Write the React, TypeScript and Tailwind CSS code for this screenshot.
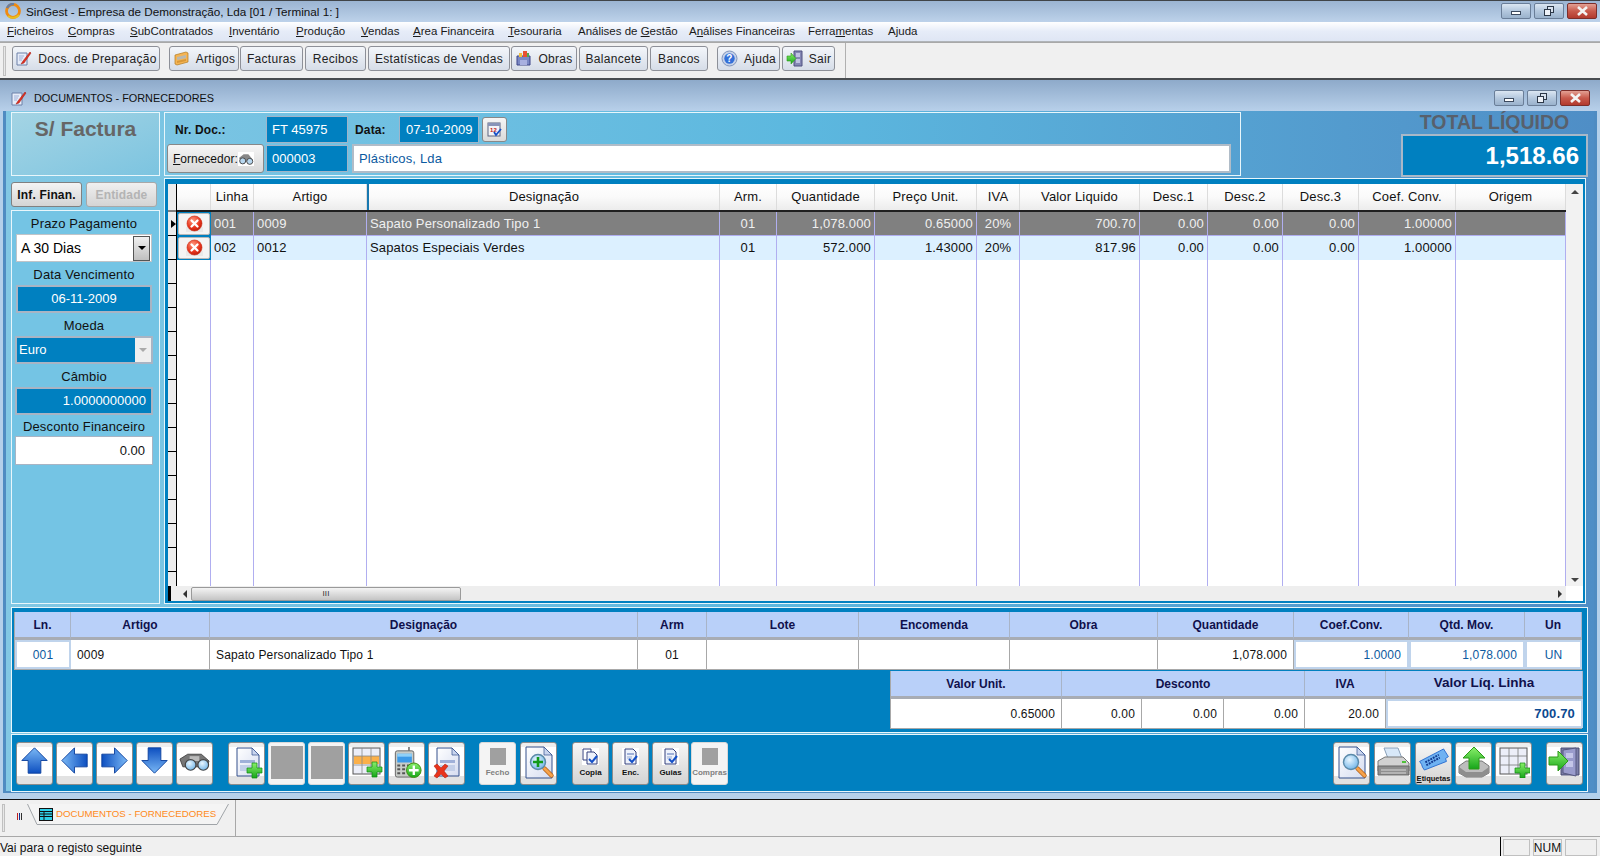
import React from "react";

const menus: [string, string, string, string][] = [
  ["w-[61px]", "", "F", "icheiros"],
  ["w-[62px]", "", "C", "ompras"],
  ["w-[99px]", "", "S", "ubContratados"],
  ["w-[67px]", "", "I", "nventário"],
  ["w-[65px]", "", "P", "rodução"],
  ["w-[52px]", "", "V", "endas"],
  ["w-[95px]", "", "A", "rea Financeira"],
  ["w-[70px]", "", "T", "esouraria"],
  ["w-[111px]", "Análises de ", "G", "estão"],
  ["w-[119px]", "A", "n", "álises Financeiras"],
  ["w-[80px]", "Ferra", "m", "entas"],
  ["w-[40px]", "A", "j", "uda"],
];

function Defs() {
  return (
    <svg width="0" height="0" className="absolute">
      <defs>
        <linearGradient id="gBlue" x1="0" y1="0" x2="0" y2="1">
          <stop offset="0" stopColor="#7ab8f5" />
          <stop offset="1" stopColor="#0d4fc0" />
        </linearGradient>
        <linearGradient id="gDoc" x1="0" y1="0" x2="1" y2="1">
          <stop offset="0" stopColor="#ffffff" />
          <stop offset="1" stopColor="#d5dcf0" />
        </linearGradient>
        <linearGradient id="gGreen" x1="0" y1="0" x2="0" y2="1">
          <stop offset="0" stopColor="#8af06a" />
          <stop offset="1" stopColor="#16a51a" />
        </linearGradient>
        <radialGradient id="gRed" cx="0.4" cy="0.3" r="0.8">
          <stop offset="0" stopColor="#ff9a80" />
          <stop offset="0.6" stopColor="#e8341c" />
          <stop offset="1" stopColor="#b01808" />
        </radialGradient>
        <radialGradient id="gLens" cx="0.4" cy="0.35" r="0.7">
          <stop offset="0" stopColor="#e8f6ff" />
          <stop offset="1" stopColor="#6fb4e8" />
        </radialGradient>
      </defs>
    </svg>
  );
}

function Plus({ x, y, s = 16 }: { x: number; y: number; s?: number }) {
  const u = s / 3;
  return (
    <path
      transform={`translate(${x} ${y})`}
      d={`M${u} 0h${u}v${u}h${u}v${u}h${-u}v${u}h${-u}v${-u}h${-u}v${-u}h${u}z`}
      fill="url(#gGreen)"
      stroke="#0c8a10"
      strokeWidth="0.7"
    />
  );
}

function DocShape() {
  return (
    <>
      <path d="M6 2h15l7 7v21H6z" fill="url(#gDoc)" stroke="#34508c" strokeWidth="1" />
      <path d="M21 2v7h7z" fill="#c8d4ee" stroke="#34508c" strokeWidth="0.7" />
      <rect x="9" y="14" width="15" height="3" fill="#9fb0d8" />
      <rect x="9" y="19" width="15" height="6" fill="#c3cfe8" />
    </>
  );
}

function Lens({ cx = 16, cy = 17, r = 7 }: { cx?: number; cy?: number; r?: number }) {
  return (
    <>
      <path d={`M${cx + r - 1} ${cy + r - 1}l7 7`} stroke="#b05a10" strokeWidth="4.4" strokeLinecap="round" />
      <path d={`M${cx + r - 1} ${cy + r - 1}l7 7`} stroke="#f6a24a" strokeWidth="3" strokeLinecap="round" />
      <circle cx={cx} cy={cy} r={r} fill="url(#gLens)" stroke="#5b8aa8" strokeWidth="1.4" />
    </>
  );
}

function Arrow({ dir }: { dir: "up" | "left" | "right" | "down" }) {
  const rot = { up: 0, right: 90, down: 180, left: 270 }[dir];
  return (
    <svg width="29" height="29" viewBox="0 0 32 32">
      <g transform={`rotate(${rot} 16 16)`}>
        <path d="M16 2L30 16H23V30H9V16H2Z" fill="url(#gBlue)" stroke="#0b3f9c" strokeWidth="1" strokeLinejoin="round" />
      </g>
    </svg>
  );
}

function Binoc() {
  return (
    <svg width="33" height="30" viewBox="0 0 34 30">
      <path d="M2 13L10 8h14l8 7-2 6H5z" fill="#777" stroke="#333" strokeWidth="0.8" />
      <rect x="12" y="10" width="10" height="5" fill="#bbb" />
      <circle cx="13" cy="19" r="5.5" fill="url(#gLens)" stroke="#444" strokeWidth="1.2" />
      <circle cx="26" cy="19" r="5.5" fill="url(#gLens)" stroke="#444" strokeWidth="1.2" />
    </svg>
  );
}

function IconNewDoc() {
  return (
    <svg width="32" height="33" viewBox="0 0 32 33">
      <DocShape />
      <Plus x={16} y={17} s={15} />
    </svg>
  );
}
function IconDelDoc() {
  return (
    <svg width="32" height="33" viewBox="0 0 32 33">
      <DocShape />
      <path d="M3 20l3-2 4 4 4-4 3 2-4 5 4 5-3 2-4-4-4 4-3-2 4-5z" fill="#e8341c" stroke="#a81808" strokeWidth="0.5" />
    </svg>
  );
}
function IconTable() {
  return (
    <svg width="32" height="32" viewBox="0 0 32 32">
      <rect x="2" y="2" width="27" height="26" fill="#eceef8" stroke="#555" />
      <rect x="3" y="10" width="25" height="8" fill="#fbb04a" />
      <path d="M11 2v26M20 2v26M2 10h27M2 19h27" stroke="#888" strokeWidth="0.8" fill="none" />
      <Plus x={16} y={16} s={15} />
    </svg>
  );
}
function IconGrid() {
  return (
    <svg width="32" height="32" viewBox="0 0 32 32">
      <rect x="2" y="2" width="27" height="26" fill="#eceef8" stroke="#555" />
      <path d="M11 2v26M20 2v26M2 10h27M2 19h27" stroke="#777" strokeWidth="0.8" fill="none" />
      <Plus x={17} y={17} s={15} />
    </svg>
  );
}
function IconPhone() {
  return (
    <svg width="32" height="33" viewBox="0 0 32 34">
      <path d="M18 1v5" stroke="#888" strokeWidth="2" />
      <rect x="4" y="5" width="19" height="27" rx="2" fill="#c8ccc8" stroke="#666" />
      <rect x="6" y="8" width="15" height="9" fill="#3c9ae8" />
      <rect x="6" y="8" width="15" height="3" fill="#8ed0f8" />
      <path d="M6 20h3M11 20h3M16 20h3M6 24h3M11 24h3M6 28h3M11 28h3" stroke="#555" strokeWidth="2" />
      <circle cx="23" cy="25" r="7.5" fill="url(#gGreen)" stroke="#3f8e10" />
      <path d="M23 20v10M18 25h10" stroke="#fff" strokeWidth="2.4" />
    </svg>
  );
}
function IconZoomDoc({ plus }: { plus?: boolean }) {
  return (
    <svg width="32" height="33" viewBox="0 0 32 33">
      <path d="M3 1h18l8 8v23H3z" fill="url(#gDoc)" stroke="#34508c" />
      <path d="M21 1v8h8z" fill="#c8d4ee" stroke="#34508c" strokeWidth="0.7" />
      <Lens cx={15} cy={16} r={7.5} />
      {plus && <path d="M15 11v10M10 16h10" stroke="#119a18" strokeWidth="2.6" />}
    </svg>
  );
}
function IconPrinter() {
  return (
    <svg width="34" height="32" viewBox="0 0 34 32">
      <path d="M8 2h14l5 13H13z" fill="#d8e8f8" stroke="#8aa0b8" />
      <path d="M2 15l7-4h18l6 6v8H2z" fill="#d2d2d2" stroke="#777" />
      <path d="M2 20h31v9H2z" fill="#8f8f8f" stroke="#666" />
      <path d="M5 24h25M5 27h25" stroke="#d8d8d8" />
      <rect x="26" y="15" width="4" height="2" fill="#4ec238" />
    </svg>
  );
}
function IconTicket() {
  return (
    <svg width="32" height="23" viewBox="0 0 32 24">
      <path d="M1 14L26 1l5 8-3 2 1 3L6 23 4 20l-1-3z" fill="#6fb2f2" stroke="#2a6ed0" />
      <path d="M7 15l14-8M8 18l14-8" stroke="#123a90" strokeWidth="2" strokeDasharray="2 1" fill="none" />
    </svg>
  );
}
function IconUpload() {
  return (
    <svg width="34" height="32" viewBox="0 0 34 32">
      <path d="M2 20l7-5h16l7 5v7l-7 4H9l-7-4z" fill="#bdbdbd" stroke="#777" />
      <path d="M2 21l7 5h16l7-5v6l-7 4H9l-7-4z" fill="#8e8e8e" />
      <path d="M17 1l11 11h-6v11H12V12H6z" fill="url(#gGreen)" stroke="#2c9a18" />
    </svg>
  );
}
function IconDoor() {
  return (
    <svg width="34" height="32" viewBox="0 0 34 32">
      <path d="M13 2h18v27H13z" fill="#7b7ea8" stroke="#484a70" />
      <path d="M15 4l13-2v28l-13-3z" fill="#9a9ccc" stroke="#565880" />
      <rect x="18" y="7" width="7" height="5" fill="#c4c6e8" />
      <rect x="18" y="15" width="7" height="6" fill="#c4c6e8" />
      <path d="M1 11h9V5l10 10-10 10v-6H1z" fill="url(#gGreen)" stroke="#2c9a18" />
    </svg>
  );
}
function IconCopy({ kind }: { kind: "copy" | "doc" }) {
  return (
    <svg width="17" height="17" viewBox="0 0 17 17" className="bg-white">
      {kind === "copy" && <path d="M1 1h8v11H1z" fill="#fff" stroke="#34407c" />}
      <path d={kind === "copy" ? "M5 4h7l3 3v9H5z" : "M3 1h8l3 3v12H3z"} fill="#eef2fb" stroke="#34407c" />
      {kind === "doc" && <rect x="5" y="5" width="7" height="2" fill="#9fb0d8" />}
      {kind === "doc" && <rect x="5" y="8" width="5" height="3" fill="#c3cfe8" />}
      <path d="M7 11l3 3 5-6" stroke="#1450c8" strokeWidth="2" fill="none" />
    </svg>
  );
}

function PenDoc() {
  return (
    <svg width="17" height="17" viewBox="0 0 17 17">
      <path d="M2 3h10v12H2z" fill="#e6ecf8" stroke="#6c80a8" />
      <path d="M4 6h5M4 8h4M4 10h3" stroke="#9fb0d8" />
      <path d="M15 2L8 11l-2 3 3-1 7-10z" fill="#e03020" stroke="#a01810" strokeWidth="0.5" />
    </svg>
  );
}
function BoxIcon() {
  return (
    <svg width="17" height="17" viewBox="0 0 17 17">
      <path d="M2 5l11-3 2 1v9L4 15l-2-1z" fill="#f5b453" stroke="#b07a20" strokeWidth="0.7" />
      <path d="M4 7l9-2v3l-9 2z" fill="#b8b8b0" />
      <path d="M4 11l9-2v2l-9 2z" fill="#d89838" />
    </svg>
  );
}
function ObrasIcon() {
  return (
    <svg width="17" height="17" viewBox="0 0 17 17">
      <path d="M2 6h13v9H2z" fill="#7a88c4" stroke="#3c4488" />
      <path d="M8 1h4v6H8z" fill="#e85030" />
      <path d="M4 3h3v4H4z" fill="#f0c040" />
      <path d="M12 3h2v4h-2z" fill="#50a850" />
      <path d="M5 10h7v5H5z" fill="#a8b0e0" />
    </svg>
  );
}
function HelpIcon() {
  return (
    <svg width="17" height="17" viewBox="0 0 17 17">
      <circle cx="8.5" cy="8.5" r="7.5" fill="#c6d2e8" stroke="#8296bc" />
      <circle cx="8.5" cy="8.5" r="5.2" fill="#3470d8" />
      <text x="8.5" y="12" textAnchor="middle" fontSize="10" fontWeight="700" fill="#fff" fontFamily="'Liberation Sans',sans-serif">?</text>
    </svg>
  );
}
function ExitIcon() {
  return (
    <svg width="17" height="17" viewBox="0 0 17 17">
      <path d="M8 1h8v15H8z" fill="#8487b4" stroke="#4e5080" />
      <path d="M10 3h4v4h-4zM10 9h4v4h-4z" fill="#bfc2e2" />
      <path d="M1 6h4V3l5 5.5L5 14v-3H1z" fill="url(#gGreen)" stroke="#2c9a18" strokeWidth="0.6" />
    </svg>
  );
}
function Logo() {
  return (
    <svg width="18" height="18" viewBox="0 0 18 18">
      <circle cx="9" cy="8" r="6.5" fill="none" stroke="#f08a10" strokeWidth="2.8" />
      <path d="M3 5a7 7 0 0 1 7-4" stroke="#6a7ea0" strokeWidth="2.4" fill="none" />
      <path d="M4 13a8 8 0 0 0 11-1" stroke="#e8c020" strokeWidth="2" fill="none" />
    </svg>
  );
}
function SmallBinoc() {
  return (
    <svg width="16" height="14" viewBox="0 0 17 14" className="bg-white">
      <path d="M1 6l5-4h5l5 6-3 2H4z" fill="#888" />
      <circle cx="5" cy="9" r="3.2" fill="#b8d8f0" stroke="#444" />
      <circle cx="12.5" cy="9.5" r="3.2" fill="#b8d8f0" stroke="#444" />
    </svg>
  );
}
function Calendar() {
  return (
    <svg width="17" height="17" viewBox="0 0 17 17">
      <rect x="2" y="2" width="12" height="13" fill="#f4f4f8" stroke="#5a6480" />
      <path d="M2 2h12v3H2z" fill="#8894b8" />
      <text x="4" y="11" fontSize="6" fontWeight="700" fill="#c02020" fontFamily="'Liberation Sans',sans-serif">12</text>
      <path d="M8 11l2 3 5-6" stroke="#1450c8" strokeWidth="1.8" fill="none" />
    </svg>
  );
}
function RedX() {
  return (
    <svg width="19" height="19" viewBox="0 0 19 19">
      <rect x="1" y="12" width="17" height="5" fill="#e9e9e9" />
      <circle cx="9.5" cy="8.5" r="7.5" fill="url(#gRed)" stroke="#c82810" strokeWidth="0.6" />
      <path d="M6.5 5.5l6 6M12.5 5.5l-6 6" stroke="#fff" strokeWidth="2.3" strokeLinecap="round" />
    </svg>
  );
}
function TabIcon() {
  return (
    <svg width="14" height="13" viewBox="0 0 14 13">
      <rect x="0.5" y="0.5" width="13" height="12" fill="#2fd0e8" stroke="#101010" />
      <path d="M1 3.5h12M1 6h12M1 8.5h12M5 3v9" stroke="#101010" fill="none" />
    </svg>
  );
}

function WinButtons() {
  const btn = "w-[30px] h-[16px] rounded-[2px] border border-[#6a7e98] flex items-center justify-center";
  const glass = "bg-gradient-to-b from-[#dbe6f2] via-[#b4c8de] to-[#9ab2cc]";
  return (
    <div className="flex gap-[3px]">
      <div className={`${btn} ${glass}`}>
        <div className="w-[10px] h-[4px] border border-[#3c4a5e] bg-white mt-[4px]" />
      </div>
      <div className={`${btn} ${glass}`}>
        <svg width="12" height="12" viewBox="0 0 12 12">
          <rect x="4.5" y="1.5" width="6" height="6" fill="#d8e2ee" stroke="#2c3848" />
          <rect x="1.5" y="4.5" width="6" height="6" fill="#eef2f8" stroke="#2c3848" />
        </svg>
      </div>
      <div className="w-[30px] h-[16px] rounded-[2px] border border-[#7c2e2a] flex items-center justify-center bg-gradient-to-b from-[#e2a094] via-[#c85a4c] to-[#b23a2e]">
        <svg width="13" height="10" viewBox="0 0 13 10">
          <path d="M2 1l9 8M11 1l-9 8" stroke="#f4f4f4" strokeWidth="2.6" />
        </svg>
      </div>
    </div>
  );
}

function TbBtn({ w, ml, icon, label }: { w: string; ml: string; icon?: React.ReactNode; label: string }) {
  return (
    <div className={`${w} ${ml} h-[25px] shrink-0 rounded-[3px] border border-[#8d9098] bg-gradient-to-b from-[#f3f6fa] to-[#d6dde8] flex items-center justify-center gap-[6px] text-[12px] tracking-[0.3px] whitespace-nowrap text-[#222]`}>
      {icon}
      <span>{label}</span>
    </div>
  );
}

function IconBtn({ children, ml, caption, dim, plain }: { children?: React.ReactNode; ml?: string; caption?: React.ReactNode; dim?: boolean; plain?: boolean }) {
  const bg = plain
    ? "bg-[#f4f4f4] border-[#d8d8d8]"
    : caption
      ? "bg-gradient-to-b from-[#f6f6f6] to-[#d4d4d4] border-[#8c8c8c]"
      : "bg-[linear-gradient(#eeeeee_0,#eeeeee_4px,#ffffff_4px,#ffffff_33px,#e2e2e2_33px)] border-[#8c8c8c]";
  return (
    <div className={`${ml ?? "ml-[3px]"} ${bg} w-[37px] h-[43px] shrink-0 rounded-[3px] border flex flex-col items-center ${caption ? "pt-[5px]" : "pt-[3px]"}`}>
      {children}
      {caption && (
        <span className={`text-[8px] leading-[10px] font-bold mt-[3px] tracking-normal whitespace-nowrap ${dim ? "text-[#808080]" : "text-[#111]"}`}>{caption}</span>
      )}
    </div>
  );
}

function Gray({ s = 32 }: { s?: number }) {
  return s === 32 ? <div className="w-[32px] h-[33px] bg-[#a0a0a0]" /> : <div className="w-[16px] h-[17px] bg-[#a0a0a0]" />;
}

const GRID_COLS = "grid grid-cols-[34px_43px_113px_353px_57px_98px_102px_43px_120px_68px_75px_76px_97px_110px]";
const heads = ["", "Linha", "Artigo", "Designação", "Arm.", "Quantidade", "Preço Unit.", "IVA", "Valor Liquido", "Desc.1", "Desc.2", "Desc.3", "Coef. Conv.", "Origem"];

function Row({ dark, vals }: { dark?: boolean; vals: string[] }) {
  const base = `h-[24px] flex items-center px-[3px] overflow-hidden whitespace-nowrap border-r border-[#b0aef0] ${dark ? "bg-[#808080] text-[#f0f0f0] border-b border-[#3f9cf0]" : "bg-[#dcf0ff] text-[#111]"}`;
  const aligns = ["", "", "", "justify-center", "justify-end", "justify-end", "justify-center", "justify-end", "justify-end", "justify-end", "justify-end", "justify-end", ""];
  return (
    <>
      <div className="h-[24px] bg-[#0080c0] p-[1px] flex">
        <div className="flex-1 bg-[#f4f4f4] rounded-[2px] border border-[#b8b8b8] flex items-center justify-center">
          <RedX />
        </div>
      </div>
      {vals.map((v, i) => (
        <div key={i} className={`${base} ${aligns[i]}`}>{v}</div>
      ))}
    </>
  );
}

function Th({ children, big, span }: { children?: React.ReactNode; big?: boolean; span?: boolean }) {
  return (
    <div className={`${span ? "col-span-3" : ""} flex items-center justify-center border-r border-b-[3px] border-b-[#a8acb4] border-r-[#a8b4c8] bg-[#b9d0f9] text-[#10104c] tracking-normal font-bold ${big ? "text-[13.5px]" : "text-[12px]"}`}>{children}</div>
  );
}
function Td({ children, align, blue, boxed, strong }: { children?: React.ReactNode; align?: string; blue?: boolean; boxed?: boolean; strong?: boolean }) {
  const color = strong ? "font-bold text-[13px] text-[#0c4a90]" : blue ? "text-[#0c5aa0]" : "text-[#111]";
  return (
    <div className={`flex items-center px-[6px] bg-white ${boxed ? "border-2 border-[#c0d4ec]" : "border-r border-r-[#a8a8a8]"} ${align ?? ""} ${color}`}>{children}</div>
  );
}

function FieldLabel({ h, children }: { h: string; children: React.ReactNode }) {
  return <div className={`${h} shrink-0 pt-[2px] flex items-center justify-center text-[13px] text-[#111]`}>{children}</div>;
}

export default function App() {
  return (
    <div className="w-[1600px] h-[856px] overflow-hidden flex flex-col bg-[#f0f0f0] text-[13px] tracking-[0.15px] font-['Liberation_Sans',Arial,sans-serif]">
      <Defs />
      {/* title bar */}
      <div className="h-[22px] shrink-0 border-t border-[#404448] bg-gradient-to-b from-[#9bb4d2] to-[#bdd2ea] flex items-center pl-[4px] pr-[3px]">
        <Logo />
        <span className="ml-[4px] text-[11.7px] text-[#101010] tracking-normal">SinGest - Empresa de Demonstração, Lda [01 / Terminal 1: ]</span>
        <div className="ml-auto mt-[-2px]"><WinButtons /></div>
      </div>
      {/* menu */}
      <div className="h-[20px] shrink-0 bg-gradient-to-b from-[#ffffff] via-[#e6ecf8] to-[#dfe6f4] border-b border-[#b0b4b8] flex items-center pl-[7px] text-[11.5px] tracking-normal text-[#1a1a1a]">
        {menus.map(([w, a, u, b]) => (
          <div key={a + u + b} className={`${w} shrink-0 whitespace-nowrap`}>
            {a}<u>{u}</u>{b}
          </div>
        ))}
      </div>
      {/* toolbar */}
      <div className="h-[38px] shrink-0 border-t border-[#a8a8a8] border-b-2 border-b-[#484c50] bg-[#f0f0f0] flex">
        <div className="w-[846px] border-r border-[#b0b0b0] flex items-start pl-[3px] pt-[3px]">
          <div className="w-[3px] h-[30px] border border-[#c0c0c0] bg-[#e8e8e8] mr-[6px]" />
          <TbBtn w="w-[148px]" ml="ml-0" icon={<PenDoc />} label="Docs. de Preparação" />
          <TbBtn w="w-[70px]" ml="ml-[9px]" icon={<BoxIcon />} label="Artigos" />
          <TbBtn w="w-[63px]" ml="ml-[1px]" label="Facturas" />
          <TbBtn w="w-[61px]" ml="ml-[2px]" label="Recibos" />
          <TbBtn w="w-[142px]" ml="ml-[2px]" label="Estatísticas de Vendas" />
          <TbBtn w="w-[66px]" ml="ml-[1px]" icon={<ObrasIcon />} label="Obras" />
          <TbBtn w="w-[69px]" ml="ml-[2px]" label="Balancete" />
          <TbBtn w="w-[58px]" ml="ml-[2px]" label="Bancos" />
          <TbBtn w="w-[63px]" ml="ml-[9px]" icon={<HelpIcon />} label="Ajuda" />
          <TbBtn w="w-[53px]" ml="ml-[2px]" icon={<ExitIcon />} label="Sair" />
        </div>
      </div>
      {/* child title */}
      <div className="h-[31px] shrink-0 bg-gradient-to-b from-[#8eaaca] to-[#b8d0ea] flex items-center pl-[10px] pr-[10px] pt-[5px]">
        <PenDoc />
        <span className="ml-[7px] text-[10.9px] text-[#101010] tracking-normal">DOCUMENTOS - FORNECEDORES</span>
        <div className="ml-auto"><WinButtons /></div>
      </div>
      {/* child body */}
      <div className="h-[689px] shrink-0 border-b border-[#101010] bg-[#b4d0ea] px-[3px] pb-[6px] flex">
        <div className="flex-1 min-w-0 border-x-[3px] border-b-[2px] border-[#4f8cc2] bg-gradient-to-r from-[#82c8e4] via-[#5cb8df] to-[#4f8ec6] flex flex-col pl-[5px] pr-[6px] pt-[1px]">
          {/* top zone */}
          <div className="h-[492px] shrink-0 flex">
            {/* left col */}
            <div className="w-[149px] shrink-0 flex flex-col">
              <div className="h-[64px] shrink-0 border border-[#e8f6fb] flex justify-center pt-[4px] bg-gradient-to-br from-[#a4d4e4] to-[#7cc4e0]">
                <span className="text-[21px] font-bold text-[#666] tracking-normal leading-[24px]">S/ Factura</span>
              </div>
              <div className="h-[25px] mt-[6px] shrink-0 flex gap-[4px]">
                <div className="w-[71px] rounded-[3px] border border-[#808080] bg-gradient-to-b from-[#f4f4f4] to-[#d4d4d4] flex items-center justify-center font-bold text-[12px] text-[#111]">Inf. Finan.</div>
                <div className="w-[71px] rounded-[3px] border border-[#a8a8a8] bg-gradient-to-b from-[#f0f0f0] to-[#d4d4d4] flex items-center justify-center font-bold text-[12px] text-[#b4b4b4]">Entidade</div>
              </div>
              <div className="flex-1 mt-[3px] border border-[#e8f6fb] bg-[#74c4e4] pl-[3px] pr-[6px] flex flex-col">
                <FieldLabel h="h-[23px]">Prazo Pagamento</FieldLabel>
                <div className="h-[28px] shrink-0 mx-[1px] bg-white border border-[#c0c4c8] flex items-center justify-between pl-[4px] pr-[1px] text-[14px] tracking-normal">
                  A 30 Dias
                  <div className="w-[17px] h-[25px] border border-[#555] bg-gradient-to-b from-[#f0f0f0] to-[#c0c0c0] flex items-center justify-center">
                    <div className="w-0 h-0 border-x-[4px] border-x-transparent border-t-[4px] border-t-black" />
                  </div>
                </div>
                <FieldLabel h="h-[23px]">Data Vencimento</FieldLabel>
                <div className="h-[28px] shrink-0 mx-[1px] bg-[#0080c0] border-2 border-[#a8b4c4] flex items-center justify-center text-white tracking-normal">06-11-2009</div>
                <FieldLabel h="h-[23px]">Moeda</FieldLabel>
                <div className="h-[28px] shrink-0 bg-[#0080c0] border-2 border-[#a8b4c4] flex items-center justify-between pl-[2px] text-white tracking-normal">
                  Euro
                  <div className="w-[16px] h-full bg-[#efefef] flex items-center justify-center">
                    <div className="w-0 h-0 border-x-[4px] border-x-transparent border-t-[4px] border-t-[#aaa]" />
                  </div>
                </div>
                <FieldLabel h="h-[23px]">Câmbio</FieldLabel>
                <div className="h-[28px] shrink-0 bg-[#0080c0] border-2 border-[#a8b4c4] flex items-center justify-end pr-[5px] text-white tracking-normal">1.0000000000</div>
                <FieldLabel h="h-[21px]">Desconto Financeiro</FieldLabel>
                <div className="h-[29px] shrink-0 bg-white border border-[#a8b4c4] flex items-center justify-end pr-[7px] text-[#111] tracking-normal">0.00</div>
              </div>
            </div>
            {/* right col */}
            <div className="flex-1 min-w-0 ml-[4px] flex flex-col">
              <div className="h-[66px] shrink-0 flex items-start">
                <div className="w-[1077px] h-[64px] border border-[#e8f6fb] pl-[2px] pt-[3px] flex flex-col gap-[1px]">
                  <div className="h-[27px] flex items-center">
                    <span className="ml-[8px] w-[91px] font-bold text-[12px] text-[#111]">Nr. Doc.:</span>
                    <div className="w-[82px] h-[27px] bg-[#0080c0] border border-[#a0b4c8] text-white tracking-normal flex items-center pl-[5px]">FT 45975</div>
                    <span className="ml-[7px] w-[44px] font-bold text-[12px] text-[#111]">Data:</span>
                    <div className="w-[80px] h-[27px] bg-[#0080c0] border border-[#a0b4c8] text-white flex items-center pl-[6px] tracking-normal">07-10-2009</div>
                    <div className="ml-[3px] w-[25px] h-[25px] rounded-[3px] border border-[#888] bg-gradient-to-b from-[#f6f6f6] to-[#dadada] flex items-center justify-center"><Calendar /></div>
                  </div>
                  <div className="h-[29px] flex items-center">
                    <div className="w-[97px] h-[29px] rounded-[3px] border border-[#888] bg-gradient-to-b from-[#f6f6f6] to-[#d8d8d8] flex items-center pl-[5px] text-[12px] text-[#111] tracking-normal">
                      <span><u>F</u>ornecedor:</span><SmallBinoc />
                    </div>
                    <div className="ml-[2px] w-[82px] h-[27px] bg-[#0080c0] border border-[#a0b4c8] text-white tracking-normal flex items-center pl-[5px]">000003</div>
                    <div className="ml-[4px] w-[879px] h-[29px] bg-white border-2 border-[#b0bcc8] text-[#0c5aa0] flex items-center pl-[5px]">Plásticos, Lda</div>
                  </div>
                </div>
                <div className="ml-auto w-[187px] h-[65px] flex flex-col">
                  <div className="h-[22px] shrink-0 flex items-center justify-center text-[19.5px] font-bold text-[#58606c] tracking-normal">TOTAL LÍQUIDO</div>
                  <div className="flex-1 bg-[#0080c0] border-2 border-[#a8b8c8] flex items-center justify-end pr-[7px] text-[24px] font-bold text-white tracking-normal">1,518.66</div>
                </div>
              </div>
              {/* grid panel */}
              <div className="flex-1 min-h-0 mr-[2px] border border-[#e8f6fb] bg-[#0080c0] pl-[3px] pt-[5px] pr-[2px] pb-[2px] flex">
                <div className="flex-1 min-w-0 flex bg-white">
                  <div className="w-[1398px] flex flex-col">
                    <div className="flex-1 min-h-0 flex overflow-hidden">
                      <div className="w-[9px] shrink-0 bg-[#ededed] flex flex-col border-r border-black">
                        <div className="h-[28px] shrink-0 border-b-2 border-[#808080]" />
                        <div className="h-[24px] shrink-0 border-b border-black flex items-center">
                          <div className="w-0 h-0 border-y-[4px] border-y-transparent border-l-[5px] border-l-black ml-[3px]" />
                        </div>
                        {Array.from({ length: 15 }).map((_, i) => (
                          <div key={i} className="h-[24px] shrink-0 border-b border-black" />
                        ))}
                      </div>
                      <div className="flex-1 min-w-0 flex flex-col">
                        <div className={`${GRID_COLS} h-[28px] shrink-0 border-b-2 border-[#202020] bg-gradient-to-b from-[#ffffff] via-[#fafafa] to-[#ececec]`}>
                          {heads.map((h, i) => (
                            <div key={i} className={`flex items-center justify-center border-r ${i === 3 ? "border-l-2 border-l-[#1878b0]" : ""} border-[#dcdcdc] text-[#111]`}>{h}</div>
                          ))}
                        </div>
                        <div className={`${GRID_COLS} flex-1 min-h-0 grid-rows-[24px_24px_1fr]`}>
                          <Row dark vals={["001", "0009", "Sapato Personalizado Tipo 1", "01", "1,078.000", "0.65000", "20%", "700.70", "0.00", "0.00", "0.00", "1.00000", ""]} />
                          <Row vals={["002", "0012", "Sapatos Especiais Verdes", "01", "572.000", "1.43000", "20%", "817.96", "0.00", "0.00", "0.00", "1.00000", ""]} />
                          {heads.map((_, i) => (
                            <div key={i} className="border-r border-[#b0aef0]" />
                          ))}
                        </div>
                      </div>
                    </div>
                    <div className="h-[15px] shrink-0 flex items-center bg-[#eeeeee] border-l-[3px] border-black">
                      <div className="w-[12px] flex justify-center ml-[8px]">
                        <div className="w-0 h-0 border-y-[4px] border-y-transparent border-r-[4px] border-r-[#333]" />
                      </div>
                      <div className="w-[270px] h-[14px] rounded-[2px] border border-[#9a9a9a] bg-gradient-to-b from-[#f4f4f4] to-[#c4c4c4] flex items-center justify-center text-[8px] text-[#333]">III</div>
                      <div className="ml-auto mr-[4px] w-0 h-0 border-y-[4px] border-y-transparent border-l-[4px] border-l-[#333]" />
                    </div>
                  </div>
                  <div className="flex-1 flex flex-col items-center justify-between pt-[6px] pb-[4px] bg-[#f2f2f2] border-b-[15px] border-white">
                    <div className="w-0 h-0 border-x-[4px] border-x-transparent border-b-[4px] border-b-[#444]" />
                    <div className="w-0 h-0 border-x-[4px] border-x-transparent border-t-[4px] border-t-[#444]" />
                  </div>
                </div>
              </div>
            </div>
          </div>
          {/* detail panel */}
          <div className="h-[126px] mt-[3px] shrink-0 border border-[#e8f6fb] bg-[#0080c0] pl-[2px] pr-[5px] pt-[4px] flex flex-col">
            <div className="grid grid-cols-[56px_139px_428px_69px_152px_151px_148px_136px_115px_116px_57px] grid-rows-[28px_29px] border-b border-[#a8a8a8] border-l border-l-[#a8a8a8] text-[12px]">
              <Th>Ln.</Th><Th>Artigo</Th><Th>Designação</Th><Th>Arm</Th><Th>Lote</Th><Th>Encomenda</Th><Th>Obra</Th><Th>Quantidade</Th><Th>Coef.Conv.</Th><Th>Qtd. Mov.</Th><Th>Un</Th>
              <Td boxed align="justify-center" blue>001</Td>
              <Td>0009</Td>
              <Td>Sapato Personalizado Tipo 1</Td>
              <Td align="justify-center">01</Td>
              <Td />
              <Td />
              <Td />
              <Td align="justify-end">1,078.000</Td>
              <Td boxed align="justify-end" blue>1.0000</Td>
              <Td boxed align="justify-end" blue>1,078.000</Td>
              <Td boxed align="justify-center" blue>UN</Td>
            </div>
            <div className="mt-[1px] self-end w-[692px] grid grid-cols-[171px_80px_82px_81px_81px_197px] grid-rows-[28px_29px] border-b border-[#a8a8a8] border-l border-l-[#a8a8a8] text-[12px]">
              <Th>Valor Unit.</Th>
              <Th span>Desconto</Th>
              <Th>IVA</Th>
              <Th big>Valor Líq. Linha</Th>
              <Td align="justify-end">0.65000</Td>
              <Td align="justify-end">0.00</Td>
              <Td align="justify-end">0.00</Td>
              <Td align="justify-end">0.00</Td>
              <Td align="justify-end">20.00</Td>
              <Td boxed align="justify-end" strong>700.70</Td>
            </div>
          </div>
          {/* bottom toolbar */}
          <div className="h-[58px] mt-[1px] shrink-0 border border-[#e8f6fb] bg-[#0080c0] flex items-center pl-[4px] pr-[4px]">
            <IconBtn ml="ml-0"><Arrow dir="up" /></IconBtn>
            <IconBtn><Arrow dir="left" /></IconBtn>
            <IconBtn><Arrow dir="right" /></IconBtn>
            <IconBtn><Arrow dir="down" /></IconBtn>
            <IconBtn><Binoc /></IconBtn>
            <IconBtn ml="ml-[15px]"><IconNewDoc /></IconBtn>
            <IconBtn plain><Gray /></IconBtn>
            <IconBtn plain><Gray /></IconBtn>
            <IconBtn><IconTable /></IconBtn>
            <IconBtn><IconPhone /></IconBtn>
            <IconBtn><IconDelDoc /></IconBtn>
            <IconBtn ml="ml-[14px]" plain caption="Fecho" dim><Gray s={16} /></IconBtn>
            <IconBtn ml="ml-[4px]"><IconZoomDoc plus /></IconBtn>
            <IconBtn ml="ml-[15px]" caption="Copia"><IconCopy kind="copy" /></IconBtn>
            <IconBtn caption="Enc."><IconCopy kind="doc" /></IconBtn>
            <IconBtn caption="Guias"><IconCopy kind="doc" /></IconBtn>
            <IconBtn ml="ml-[2px]" plain caption="Compras" dim><Gray s={16} /></IconBtn>
            <div className="ml-auto" />
            <IconBtn ml="ml-0"><IconZoomDoc /></IconBtn>
            <IconBtn ml="ml-[4px]"><IconPrinter /></IconBtn>
            <IconBtn ml="ml-[4px]" caption={<span className="text-[7.5px]"><u>E</u>tiquetas</span>}><IconTicket /></IconBtn>
            <IconBtn><IconUpload /></IconBtn>
            <IconBtn><IconGrid /></IconBtn>
            <IconBtn ml="ml-[14px]"><IconDoor /></IconBtn>
          </div>
        </div>
      </div>
      {/* tab bar */}
      <div className="h-[37px] shrink-0 border-b border-[#a8a8a8] bg-[#f0f0f0] flex">
        <div className="w-[236px] border-r border-[#a8a8a8] flex items-start pt-[4px] pl-[2px]">
          <div className="w-[3px] h-[28px] border border-[#c0c0c0] bg-[#e8e8e8]" />
          <div className="ml-[12px] mt-[9px] flex gap-[1px] h-[7px]">
            <div className="w-[1px] bg-[#c02020]" />
            <div className="w-[1px] bg-[#103090]" />
            <div className="w-[1px] bg-[#303030]" />
          </div>
          <div className="relative ml-[5px] w-[202px] h-[21px] flex items-center pl-[12px] gap-[3px] text-[9.7px] text-[#ff8a20] tracking-normal whitespace-nowrap">
            <svg width="202" height="21" viewBox="0 0 202 21" className="absolute inset-0">
              <path d="M0.5 0L10 20.5H190L201.5 0" fill="#f4f4f4" stroke="#a0a4a8" />
            </svg>
            <span className="relative"><TabIcon /></span>
            <span className="relative">DOCUMENTOS - FORNECEDORES</span>
          </div>
        </div>
      </div>
      {/* status */}
      <div className="flex-1 min-h-0 flex items-center text-[12px] tracking-normal text-[#111]">
        <span className="pt-[2px]">Vai para o registo seguinte</span>
        <div className="ml-auto mr-[3px] flex h-full items-stretch border-l border-black pl-[2px] gap-[3px] pt-[2px]">
          <div className="w-[27px] border border-[#c0c0c0]" />
          <div className="w-[29px] border border-[#c0c0c0] flex items-center justify-center">NUM</div>
          <div className="w-[32px] border border-[#c0c0c0]" />
        </div>
      </div>
    </div>
  );
}
